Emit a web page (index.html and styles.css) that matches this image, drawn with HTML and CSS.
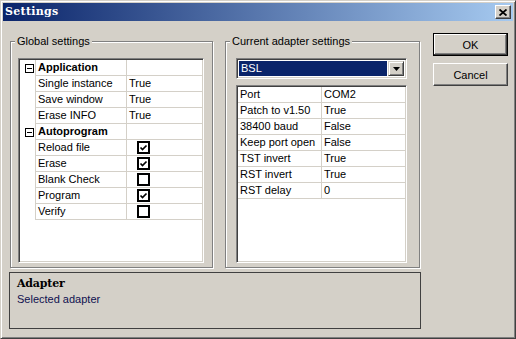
FILE: index.html
```html
<!DOCTYPE html>
<html lang="en">
<head>
    <meta charset="UTF-8">
    <title>Settings</title>
    <link rel="stylesheet" href="styles.css">
</head>
<body>
    <div class="window">
        <div class="titlebar">
            <span class="title">Settings</span>
            <span class="close-btn">
                <svg width="8" height="7" viewBox="0 0 8 7"><path d="M0.5 0.5 L7.5 6.5 M7.5 0.5 L0.5 6.5" stroke="#000" stroke-width="1.8" fill="none"/></svg>
            </span>
        </div>

        <div class="main">
            <!-- global settings -->
            <fieldset class="group group-global">
                <legend>Global settings</legend>
                <div class="grid grid-global">
                    <div class="row section"><span class="tree"><span class="expander"></span></span><span class="name">Application</span><span class="value"></span></div>
                    <div class="row"><span class="tree"></span><span class="name">Single instance</span><span class="value">True</span></div>
                    <div class="row"><span class="tree"></span><span class="name">Save window</span><span class="value">True</span></div>
                    <div class="row"><span class="tree"></span><span class="name">Erase INFO</span><span class="value">True</span></div>
                    <div class="row section"><span class="tree"><span class="expander"></span></span><span class="name">Autoprogram</span><span class="value"></span></div>
                    <div class="row"><span class="tree"></span><span class="name">Reload file</span><span class="value"><span class="check checked"><svg width="9" height="9" viewBox="0 0 9 9"><path d="M1.5 4.5 L3.5 6.5 L7.5 2.5" stroke="#000" stroke-width="1.7" fill="none"/></svg></span></span></div>
                    <div class="row"><span class="tree"></span><span class="name">Erase</span><span class="value"><span class="check checked"><svg width="9" height="9" viewBox="0 0 9 9"><path d="M1.5 4.5 L3.5 6.5 L7.5 2.5" stroke="#000" stroke-width="1.7" fill="none"/></svg></span></span></div>
                    <div class="row"><span class="tree"></span><span class="name">Blank Check</span><span class="value"><span class="check"></span></span></div>
                    <div class="row"><span class="tree"></span><span class="name">Program</span><span class="value"><span class="check checked"><svg width="9" height="9" viewBox="0 0 9 9"><path d="M1.5 4.5 L3.5 6.5 L7.5 2.5" stroke="#000" stroke-width="1.7" fill="none"/></svg></span></span></div>
                    <div class="row"><span class="tree"></span><span class="name">Verify</span><span class="value"><span class="check"></span></span></div>
                </div>
            </fieldset>

            <!-- adapter settings -->
            <fieldset class="group group-adapter">
                <legend>Current adapter settings</legend>
                <div class="combo">
                    <span class="combo-text">BSL</span>
                    <span class="combo-btn">
                        <svg width="7" height="4" viewBox="0 0 7 4"><path d="M0 0 H7 L3.5 4 Z" fill="#000"/></svg>
                    </span>
                </div>
                <div class="grid grid-adapter">
                    <div class="row"><span class="name">Port</span><span class="value">COM2</span></div>
                    <div class="row"><span class="name">Patch to v1.50</span><span class="value">True</span></div>
                    <div class="row"><span class="name">38400 baud</span><span class="value">False</span></div>
                    <div class="row"><span class="name">Keep port open</span><span class="value">False</span></div>
                    <div class="row"><span class="name">TST invert</span><span class="value">True</span></div>
                    <div class="row"><span class="name">RST invert</span><span class="value">True</span></div>
                    <div class="row"><span class="name">RST delay</span><span class="value">0</span></div>
                </div>
            </fieldset>

            <div class="buttons">
                <button class="btn btn-default">OK</button>
                <button class="btn">Cancel</button>
            </div>
        </div>

        <div class="info">
            <div class="info-title">Adapter</div>
            <div class="info-text">Selected adapter</div>
        </div>
    </div>
</body>
</html>
```

FILE: styles.css
```css
html, body {
    margin: 0;
    padding: 0;
    overflow: hidden;
}
body {
    font-family: "Liberation Sans", Arial, sans-serif;
    font-size: 11px;
    color: #000;
}
.window {
    width: 516px;
    height: 339px;
    box-sizing: border-box;
    background-color: #d4d0c8;
    border: 1px solid;
    border-color: #d4d0c8 #404040 #404040 #d4d0c8;
    box-shadow: inset 1px 1px 0 #fff, inset -1px -1px 0 #808080;
    padding: 2px;
}
.titlebar {
    height: 18px;
    display: flex;
    align-items: center;
    justify-content: space-between;
    padding: 0 2px;
    background: linear-gradient(to right, #0a246a, #a6caf0);
}
.title {
    font-family: "DejaVu Serif", "Liberation Serif", serif;
    font-weight: bold;
    font-size: 11px;
    letter-spacing: 0.3px;
    color: #fff;
    line-height: 18px;
}
.close-btn {
    width: 16px;
    height: 14px;
    box-sizing: border-box;
    display: flex;
    align-items: center;
    justify-content: center;
    background-color: #d4d0c8;
    border: 1px solid;
    border-color: #fff #404040 #404040 #fff;
    box-shadow: inset -1px -1px 0 #808080;
}
.main {
    display: flex;
    align-items: flex-start;
    padding: 12px 0 0 7px;
}
.group {
    margin: 2px 0 0 0;
    padding: 10px 0 4px 0;
    min-inline-size: 0;
    box-sizing: border-box;
    border: 1px solid #808080;
    box-shadow: 1px 1px 0 #fff, inset 1px 1px 0 #fff;
}
.group legend {
    line-height: 13px;
    padding: 0 2px;
    background-color: #d4d0c8;
}
.group-global {
    width: 203px;
    padding-left: 7px;
    padding-right: 8px;
}
.group-global legend {
    margin-left: -3px;
}
.group-adapter {
    width: 195px;
    margin-left: 12px;
    padding-left: 10px;
    padding-right: 12px;
}
.group-adapter legend {
    margin-left: -6px;
}
.grid {
    box-sizing: border-box;
    background-color: #fff;
    border: 1px solid;
    border-color: #808080 #fff #fff #808080;
    box-shadow: inset 1px 1px 0 #404040, inset -1px -1px 0 #d4d0c8;
    padding: 1px;
}
.grid-global {
    width: 186px;
    height: 205px;
}
.grid-adapter {
    width: 171px;
    height: 178px;
    margin-top: 6px;
}
.row {
    display: flex;
    height: 16px;
}
.row span.name, .row span.value {
    box-sizing: border-box;
    height: 16px;
    line-height: 15px;
    padding-left: 2px;
    border-bottom: 1px solid #d4d0c8;
    white-space: nowrap;
    overflow: hidden;
}
.tree {
    width: 15px;
    display: flex;
    align-items: center;
    padding-left: 5px;
    box-sizing: border-box;
}
.expander {
    width: 9px;
    height: 9px;
    box-sizing: border-box;
    border: 1px solid #000;
    display: flex;
    align-items: center;
    justify-content: center;
}
.expander::after {
    content: "";
    width: 5px;
    height: 1px;
    background-color: #000;
}
.grid-global .name {
    width: 91px;
    border-left: 1px solid #d4d0c8;
}
.grid-adapter .name {
    width: 83px;
}
.row .value {
    flex: 1;
    border-left: 1px solid #d4d0c8;
    display: flex;
    align-items: center;
}
.section .name {
    font-weight: bold;
}
.check {
    width: 13px;
    height: 13px;
    box-sizing: border-box;
    margin-left: 8px;
    border: 2px solid #000;
    background-color: #fff;
    display: flex;
}
.combo {
    height: 21px;
    box-sizing: border-box;
    display: flex;
    background-color: #fff;
    border: 1px solid;
    border-color: #808080 #fff #fff #808080;
    box-shadow: inset 1px 1px 0 #404040, inset -1px -1px 0 #d4d0c8;
    padding: 2px;
}
.combo-text {
    flex: 1;
    background-color: #0a246a;
    color: #fff;
    line-height: 15px;
    padding-left: 2px;
    margin-right: 1px;
}
.combo-btn {
    width: 16px;
    box-sizing: border-box;
    display: flex;
    align-items: center;
    justify-content: center;
    background-color: #d4d0c8;
    border: 1px solid;
    border-color: #d4d0c8 #404040 #404040 #d4d0c8;
    box-shadow: inset 1px 1px 0 #fff, inset -1px -1px 0 #808080;
}
.buttons {
    display: flex;
    flex-direction: column;
    gap: 7px;
    margin-left: 13px;
}
.btn {
    width: 75px;
    height: 23px;
    box-sizing: border-box;
    padding: 0;
    font-family: "Liberation Sans", Arial, sans-serif;
    font-size: 11px;
    color: #000;
    background-color: #d4d0c8;
    border: 1px solid;
    border-color: #fff #404040 #404040 #fff;
    box-shadow: inset -1px -1px 0 #808080;
}
.btn-default {
    border-color: #000;
    box-shadow: inset -1px -1px 0 #404040, inset 1px 1px 0 #fff, inset -2px -2px 0 #808080;
}
.info {
    width: 412px;
    height: 57px;
    box-sizing: border-box;
    margin: 4px 0 0 6px;
    border: 1px solid #404040;
    padding: 4px 7px;
}
.info-title {
    font-family: "DejaVu Serif", "Liberation Serif", serif;
    font-weight: bold;
    font-size: 11px;
    letter-spacing: -0.2px;
    line-height: 14px;
}
.info-text {
    margin-top: 2px;
    line-height: 13px;
    color: #101050;
}
```
